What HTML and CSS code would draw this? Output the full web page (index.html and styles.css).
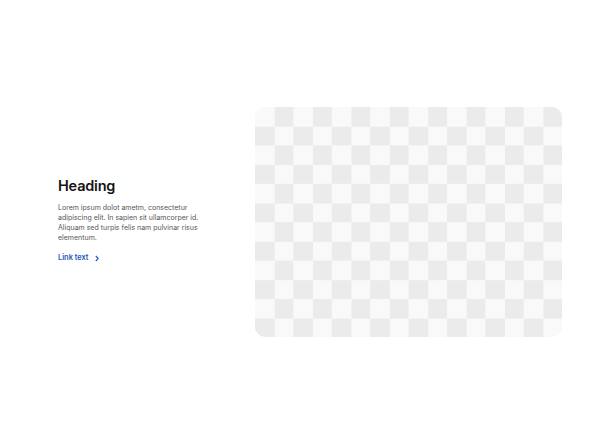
FILE: index.html
```html
<!DOCTYPE html>
<html>
<head>
<meta charset="utf-8">
<link rel="stylesheet" href="styles.css">
</head>
<body>
<main class="section">
  <div class="text">
    <h2 class="heading">Heading</h2>
    <p class="body">Lorem ipsum dolot ametm, consectetur adipiscing elit. In sapien sit ullamcorper id. Aliquam sed turpis felis nam pulvinar risus elementum.</p>
    <a class="link" href="#">Link text <svg class="chev" width="6" height="7" viewBox="0 0 6 7"><path d="M1.8 1 L4.2 3.5 L1.8 6" fill="none" stroke="#1d58b8" stroke-width="1.1"/></svg></a>
  </div>
  <div class="media"></div>
</main>
</body>
</html>
```
FILE: styles.css
```css
html, body {
  margin: 0;
  padding: 0;
  background: #ffffff;
}
.section {
  height: 444px;
  display: flex;
  align-items: center;
  justify-content: space-between;
  padding: 0 30px 0 58px;
  box-sizing: border-box;
  font-family: Inter, "Noto Sans", sans-serif;
}
.text {
  width: 150px;
  margin-top: -3px;
}
.heading {
  margin: 0;
  font-size: 14.5px;
  line-height: 18px;
  font-weight: 600;
  color: #141414;
  letter-spacing: -0.2px;
}
.body {
  margin: 8px 0 0;
  font-size: 7px;
  line-height: 10px;
  color: #555555;
}
.link {
  display: inline-flex;
  align-items: center;
  gap: 6px;
  margin-top: 10px;
  font-size: 7.4px;
  line-height: 10px;
  font-weight: 600;
  color: #1d58b8;
  text-decoration: none;
}
.media {
  width: 307px;
  height: 230px;
  border-radius: 10px;
  background-color: #f9f9f9;
  background-image: conic-gradient(#ebebeb 0 25%, #f9f9f9 0 50%, #ebebeb 0 75%, #f9f9f9 0);
  background-size: 38.4px 38.4px;
}
```
